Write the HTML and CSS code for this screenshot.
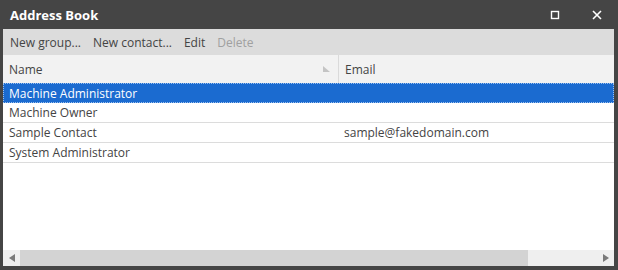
FILE: index.html
```html
<!DOCTYPE html>
<html lang="en">
<head>
    <meta charset="UTF-8">
    <title>Address Book</title>
    <link rel="stylesheet" href="styles.css">
</head>
<body>
    <div class="window">
        <div class="title-bar">
            <span class="title">Address Book</span>
            <div class="title-buttons">
                <button class="tb-btn" title="Maximize">
                    <svg width="10" height="10" viewBox="0 0 10 10"><rect x="1.5" y="1.5" width="7" height="7" fill="none" stroke="#fff" stroke-width="1.4"/></svg>
                </button>
                <button class="tb-btn" title="Close">
                    <svg width="10" height="10" viewBox="0 0 10 10"><path d="M1 1L9 9M9 1L1 9" stroke="#fff" stroke-width="1.6"/></svg>
                </button>
            </div>
        </div>
        <div class="content">
            <div class="toolbar">
                <span class="tool">New group...</span>
                <span class="tool">New contact...</span>
                <span class="tool">Edit</span>
                <span class="tool disabled">Delete</span>
            </div>
            <div class="list">
                <div class="list-head">
                    <div class="col col-name">Name
                        <svg class="sort" width="7" height="6" viewBox="0 0 7 6"><path d="M0 0L7 6H0Z" fill="#c4c4c4"/></svg>
                    </div>
                    <div class="col col-email">Email</div>
                </div>
                <div class="row selected"><div class="col col-name">Machine Administrator</div><div class="col col-email"></div></div>
                <div class="row"><div class="col col-name">Machine Owner</div><div class="col col-email"></div></div>
                <div class="row"><div class="col col-name">Sample Contact</div><div class="col col-email">sample@fakedomain.com</div></div>
                <div class="row"><div class="col col-name">System Administrator</div><div class="col col-email"></div></div>
            </div>
            <div class="hscroll">
                <div class="arrow">
                    <svg width="6" height="8" viewBox="0 0 6 8"><path d="M6 0V8L0 4Z" fill="#7a7a7a"/></svg>
                </div>
                <div class="thumb"></div>
                <div class="track"></div>
                <div class="arrow">
                    <svg width="6" height="8" viewBox="0 0 6 8"><path d="M0 0V8L6 4Z" fill="#7a7a7a"/></svg>
                </div>
            </div>
        </div>
    </div>
</body>
</html>
```

FILE: styles.css
```css
body {
    margin: 0;
    font-family: 'Open Sans', 'Noto Sans', sans-serif;
    font-size: 12px;
    background-color: #454545;
}
.window {
    width: 618px;
    height: 270px;
    background-color: #454545;
    display: flex;
    flex-direction: column;
    padding: 0 4px 4px 3px;
    box-sizing: border-box;
}
.title-bar {
    height: 29px;
    display: flex;
    align-items: center;
    justify-content: space-between;
    flex-shrink: 0;
    margin-right: -4px;
}
.title {
    color: #fff;
    font-weight: bold;
    font-size: 13px;
    padding-left: 7px;
    padding-top: 1px;
}
.title-buttons {
    display: flex;
}
.tb-btn {
    width: 42px;
    height: 29px;
    background: none;
    border: none;
    padding: 0;
    display: flex;
    align-items: center;
    justify-content: center;
}
.content {
    flex: 1;
    background-color: #fff;
    display: flex;
    flex-direction: column;
}
.toolbar {
    height: 26px;
    background-color: #dcdcdc;
    display: flex;
    align-items: center;
    padding-left: 7px;
    padding-top: 1px;
    box-sizing: border-box;
    gap: 12px;
    color: #444;
}
.tool.disabled {
    color: #a0a0a0;
}
.list {
    flex: 1;
}
.list-head {
    height: 28px;
    background-color: #f2f2f2;
    display: flex;
    align-items: center;
    color: #444;
}
.col {
    padding-left: 6px;
    box-sizing: border-box;
    display: flex;
    align-items: center;
    height: 100%;
}
.col-name {
    width: 335px;
    position: relative;
}
.col-email {
    flex: 1;
}
.list-head .col-email {
    border-left: 1px solid #dadada;
}
.sort {
    position: absolute;
    right: 8px;
    top: 11px;
}
.row {
    height: 20px;
    display: flex;
    color: #444;
    border-bottom: 1px solid #dcdcdc;
    box-sizing: border-box;
}
.row.selected {
    background-color: #1b6bd0;
    color: #fff;
    border: 1px dotted #9cc0ee;
}
.row.selected .col-name {
    padding-left: 5px;
}
.hscroll {
    height: 16px;
    display: flex;
    background-color: #efefef;
}
.arrow {
    width: 17px;
    display: flex;
    align-items: center;
    justify-content: center;
}
.thumb {
    width: 508px;
    background-color: #d3d3d3;
}
.track {
    flex: 1;
}
```
